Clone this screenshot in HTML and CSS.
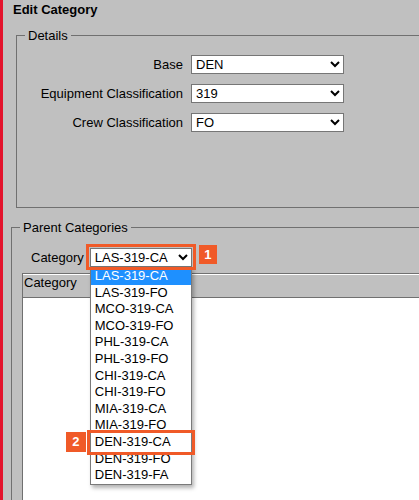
FILE: index.html
```html
<!DOCTYPE html>
<html>
<head>
<meta charset="utf-8">
<title>Edit Category</title>
<link rel="stylesheet" href="styles.css">
</head>
<body>
<div class="page">
  <h1 class="title">Edit Category</h1>

  <fieldset class="group details">
    <legend>Details</legend>
    <div class="form">
      <label class="lbl">Base</label>
      <select class="sel"><option>DEN</option></select>
      <label class="lbl">Equipment Classification</label>
      <select class="sel"><option>319</option></select>
      <label class="lbl">Crew Classification</label>
      <select class="sel"><option>FO</option></select>
    </div>
  </fieldset>

  <fieldset class="group parents">
    <legend>Parent Categories</legend>
    <div class="cat-row">
      <label class="lbl">Category</label>
      <div class="picker">
        <select class="sel sel-cat"><option>LAS-319-CA</option></select>
        <ul class="dropdown">
          <li class="opt active">LAS-319-CA</li>
          <li class="opt">LAS-319-FO</li>
          <li class="opt">MCO-319-CA</li>
          <li class="opt">MCO-319-FO</li>
          <li class="opt">PHL-319-CA</li>
          <li class="opt">PHL-319-FO</li>
          <li class="opt">CHI-319-CA</li>
          <li class="opt">CHI-319-FO</li>
          <li class="opt">MIA-319-CA</li>
          <li class="opt">MIA-319-FO</li>
          <li class="opt">DEN-319-CA</li>
          <li class="opt">DEN-319-FO</li>
          <li class="opt">DEN-319-FA</li>
        </ul>
        <span class="ring ring-1"></span>
        <span class="badge badge-1">1</span>
        <span class="ring ring-2"></span>
        <span class="badge badge-2">2</span>
      </div>
    </div>
    <div class="grid">
      <div class="grid-head">Category</div>
      <div class="grid-body"></div>
    </div>
  </fieldset>
</div>
</body>
</html>
```

FILE: styles.css
```css
html, body {
  margin: 0;
  padding: 0;
  overflow: hidden;
  background: #c0c0c0;
}

.page {
  width: 416px;
  height: 500px;
  border-left: 3px solid #e3132c;
  background: #c0c0c0;
  overflow: hidden;
  font-family: "Liberation Sans", Arial, sans-serif;
  font-size: 13px;
  color: #000;
}

.title {
  margin: 0;
  padding: 2px 0 0 10px;
  font-size: 13px;
  line-height: 15px;
  font-weight: bold;
}

.group {
  border: 1px solid #707070;
  padding: 0;
  width: 460px;
  box-sizing: border-box;
  min-inline-size: 0;
}

.group legend {
  margin-left: 8px;
  padding: 0 3px;
  line-height: 15px;
  font-size: 13px;
}

.details {
  margin: 11px 0 0 13px;
}

.form {
  display: grid;
  grid-template-columns: 166px 153px;
  column-gap: 8px;
  row-gap: 10px;
  align-items: center;
  padding: 12px 0 75px 0;
}

.lbl {
  text-align: right;
  line-height: 15px;
  white-space: nowrap;
}

.sel {
  height: 19px;
  font-family: "Liberation Sans", Arial, sans-serif;
  font-size: 13px;
  color: #000;
  background: #fff;
  border: 1px solid #767676;
  margin: 0;
  box-sizing: border-box;
}

.form .sel {
  width: 153px;
}

.parents {
  margin: 12px 0 0 8px;
  height: 300px;
}

.cat-row {
  display: flex;
  align-items: center;
  gap: 6px;
  padding: 13px 0 0 19px;
}

.picker {
  position: relative;
  height: 19px;
}

.sel-cat {
  width: 102px;
  display: block;
}

.dropdown {
  position: absolute;
  left: 0;
  top: 19px;
  width: 102px;
  margin: 0;
  padding: 0;
  list-style: none;
  background: #fff;
  border: 1px solid #7a7a7a;
  box-sizing: border-box;
  box-shadow: 2px 3px 4px rgba(0, 0, 0, 0.3);
  z-index: 2;
}

.opt {
  height: 16.6px;
  line-height: 16.6px;
  padding-left: 4px;
  white-space: nowrap;
  color: #000;
}

.opt.active {
  background: #1e90ff;
  color: #fff;
}

.ring {
  position: absolute;
  border: 3px solid #f05a28;
  box-sizing: border-box;
  z-index: 3;
}

.ring-1 {
  left: -4px;
  top: -4px;
  width: 110px;
  height: 26px;
}

.ring-2 {
  left: -3px;
  top: 182px;
  width: 108px;
  height: 25px;
}

.badge {
  position: absolute;
  background: #f05a28;
  color: #fff;
  font-weight: bold;
  font-size: 13px;
  text-align: center;
  z-index: 3;
}

.badge-1 {
  left: 109px;
  top: -3px;
  width: 18px;
  height: 19px;
  line-height: 19px;
}

.badge-2 {
  left: -24px;
  top: 184px;
  width: 20px;
  height: 20px;
  line-height: 20px;
}

.grid {
  margin: 6px 0 0 10px;
  border-top: 1px solid #707070;
  border-left: 1px solid #707070;
  background: #fff;
  height: 300px;
}

.grid-head {
  background: #c0c0c0;
  border-top: 1px solid #ffffff;
  border-bottom: 1px solid #707070;
  height: 22px;
  line-height: 15px;
  padding-left: 1px;
}

.grid-body {
  background: #fff;
}
```
